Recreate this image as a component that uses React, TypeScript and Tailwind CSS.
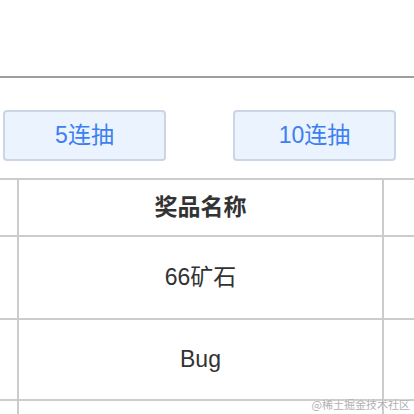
import React from "react";

const rows = ["66矿石", "Bug"];

function Row({ children, head, height }: { children: React.ReactNode; head?: boolean; height: string }) {
  return (
    <div className={`flex border-b-2 border-[#cccccc] ${height}`}>
      <div className="w-[19px] shrink-0 border-r-2 border-[#cccccc]" />
      <div
        className={`flex flex-1 items-center justify-center text-[23px] text-[#333333] ${
          head ? "font-bold" : ""
        }`}
      >
        {children}
      </div>
      <div className="w-[32px] shrink-0 border-l-2 border-[#cccccc]" />
    </div>
  );
}

export default function App() {
  return (
    <div
      className="relative h-[414px] w-[414px] overflow-hidden bg-white"
      style={{ fontFamily: '"Liberation Sans", "Noto Sans CJK SC", sans-serif' }}
    >
      <div className="h-[76px]" />
      <div className="h-[2px] bg-[#9e9e9e]" />

      {/* 抽奖按钮 */}
      <div className="flex gap-[67px] pl-[3px] pt-[32px] pb-[17px]">
        {["5连抽", "10连抽"].map((t) => (
          <button
            key={t}
            type="button"
            className="flex h-[51px] w-[163px] items-center justify-center rounded-[4px] border-2 border-[#cad6e6] bg-[#ebf3fe] text-[23px] text-[#3b7ff2]"
          >
            {t}
          </button>
        ))}
      </div>

      {/* 奖品表格 */}
      <div className="border-t-2 border-[#cccccc]">
        <Row head height="h-[57px]">奖品名称</Row>
        {rows.map((r, i) => (
          <Row key={r} height={i === 0 ? "h-[83px]" : "h-[81px]"}>
            {r}
          </Row>
        ))}
        <Row height="h-[40px]">{""}</Row>
      </div>

      <div
        className="absolute bottom-[2px] right-[4px] text-[11px] text-[#b0b0b0]"
        style={{ fontFamily: '"Noto Sans CJK SC", sans-serif', textShadow: "0 0 2px #fff" }}
      >
        @稀土掘金技术社区
      </div>
    </div>
  );
}
